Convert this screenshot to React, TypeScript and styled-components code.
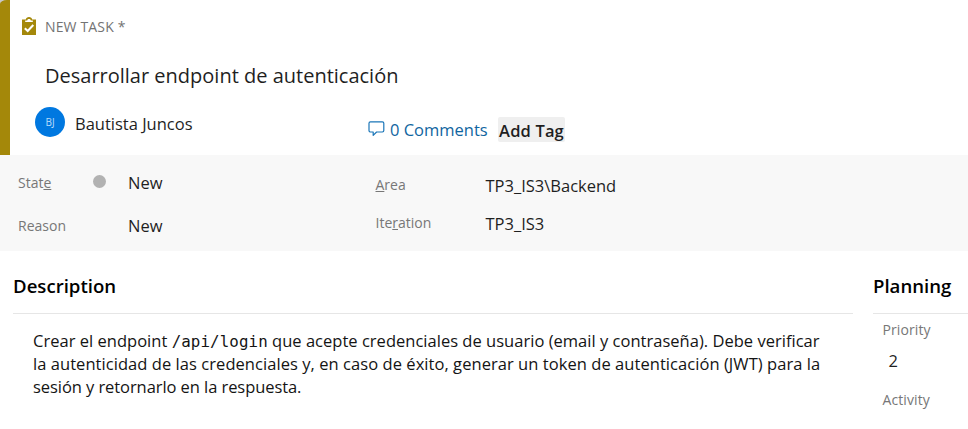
import React from "react";
import styled, { createGlobalStyle } from "styled-components";

const GlobalStyle = createGlobalStyle`
  * { box-sizing: border-box; }
  body {
    margin: 0;
    background: #fff;
    color: #1f1f1f;
    font-family: "Open Sans", "Noto Sans", sans-serif;
    font-size: 16.5px;
    line-height: 22px;
    overflow: hidden;
  }
`;

const Form = styled.main`
  display: flex;
  flex-direction: column;
  width: 968px;
  height: 429px;
  overflow: hidden;
`;

const HeaderFrame = styled.div`
  height: 155px;
  background: linear-gradient(#c8c8c8, #c8c8c8) 0 0 / 8px 8px no-repeat;
`;

const Header = styled.header`
  height: 155px;
  padding-top: 16px;
  border-left: 10px solid #a4880a;
  border-top-left-radius: 7px 4px;
  background: #fff;
  background-clip: padding-box;
`;

const TypeRow = styled.div`
  display: flex;
  align-items: center;
  height: 20px;
  padding-left: 12px;
  gap: 9px;
  color: #737373;
  font-size: 14px;
  line-height: 20px;
`;

const TypeName = styled.span`
  padding-top: 2px;
  letter-spacing: 0.15px;
`;

const Title = styled.h1`
  margin: 26px 0 0 35px;
  font-size: 20px;
  font-weight: 400;
  line-height: 28px;
`;

const PeopleRow = styled.div`
  display: flex;
  align-items: flex-start;
  margin-top: 16px;
  padding-left: 25px;
`;

const Avatar = styled.span`
  display: grid;
  place-items: center;
  width: 30px;
  height: 30px;
  margin: 1px 10px 0 0;
  border-radius: 50%;
  background: #0078e0;
  color: #b9dcfa;
  font-size: 10px;
  line-height: 14px;
`;

const Assignee = styled.span`
  width: 293px;
  padding-top: 7px;
`;

const Comments = styled.a`
  display: flex;
  gap: 5px;
  width: 130px;
  padding-top: 13px;
  color: #10659f;
  white-space: nowrap;

  svg { margin-top: 2px; flex: none; }
`;

const AddTag = styled.button`
  width: 67px;
  height: 25px;
  margin-top: 11px;
  padding: 2px 0 0;
  border: 0;
  border-radius: 2px;
  background: #efefef;
  color: #1f1f1f;
  font: 600 16.5px/22px "Open Sans", sans-serif;
  letter-spacing: 0.15px;
  white-space: nowrap;
`;

const Meta = styled.section`
  display: flex;
  height: 96px;
  background: #f8f8f8;
`;

const MetaColumn = styled.div<{ $width: number; $top: number; $gap: number }>`
  display: flex;
  flex-direction: column;
  width: ${(p) => p.$width}px;
  padding: ${(p) => p.$top}px 0 0 18px;
  gap: ${(p) => p.$gap}px;
`;

const Field = styled.div<{ $lift?: number }>`
  display: flex;
  align-items: flex-start;
  height: 22px;

  > label { padding-top: ${(p) => p.$lift ?? 0}px; }
`;

const Label = styled.label`
  width: 110px;
  color: #777;
  font-size: 14px;
  line-height: 20px;
`;

const StateLabel = styled(Label)`
  width: 75px;
`;

const Key = styled.span`
  text-decoration: underline;
  text-decoration-thickness: 1px;
  text-underline-offset: 1px;
  text-decoration-skip-ink: none;
`;

const StateDot = styled.span`
  width: 13px;
  height: 13px;
  margin: 3px 22px 0 0;
  border-radius: 50%;
  background: #b2b2b2;
`;

const Body = styled.div`
  display: grid;
  grid-template-columns: 840px 1fr;
  column-gap: 20px;
  padding: 22px 0 0 13px;
`;

const Heading = styled.h2`
  height: 41px;
  margin: 0;
  border-bottom: 1px solid #e6e6e6;
  color: #000;
  font-size: 18.6px;
  font-weight: 600;
  line-height: 26px;
`;

const Description = styled.p`
  margin: 0;
  padding: 15px 0 0 20px;
  color: #141414;
  line-height: 23px;
  white-space: nowrap;
`;

const Code = styled.code`
  font-family: "DejaVu Sans Mono", monospace;
  font-size: 15.8px;
  line-height: 1;
  letter-spacing: 0.1px;
`;

const Line = styled.span<{ $track?: number }>`
  display: block;
  letter-spacing: ${(p) => p.$track ?? 0}px;
`;

const Planning = styled.div`
  padding: 6px 0 0 9.5px;

  > label { display: block; letter-spacing: 0.1px; }
`;

const PriorityValue = styled.div`
  padding: 10px 0 18px 6px;
`;

export default function App() {
  return (
    <Form>
      <GlobalStyle />
      <HeaderFrame>
        <Header>
          <TypeRow>
            <svg width="14" height="18" viewBox="0 0 14 18" fill="none">
              <path d="M0 2.500H3.800C4 .9 5.300 0 7 0s3 .9 3.200 2.500H14V18H0Z" fill="#a4880a" />
              <path d="M3.200 3.600H5.200C5.500 2.500 6 2.100 7 2.100s1.500.4 1.800 1.500h2v1.500H3.200Z" fill="#fff" />
              <path d="m2.800 11.200 2.900 2.800 5.600-6" stroke="#fff" strokeWidth="2" />
            </svg>
            <TypeName>NEW TASK *</TypeName>
          </TypeRow>
          <Title>Desarrollar endpoint de autenticación</Title>
          <PeopleRow>
            <Avatar>BJ</Avatar>
            <Assignee>Bautista Juncos</Assignee>
            <Comments>
              <svg width="17" height="16" viewBox="0 0 17 16" fill="none" stroke="#1b76b8" strokeWidth="1.2">
                <path d="M2.400.8h12q1.400 0 1.400 1.400v7.400q0 1.400-1.400 1.400H8.600l-3.400 3.400V11H3.200Q1 11 1 9.600V2.200Q1 .8 2.400.8Z" strokeLinejoin="round" />
              </svg>
              <span>0 Comments</span>
            </Comments>
            <AddTag>Add Tag</AddTag>
          </PeopleRow>
        </Header>
      </HeaderFrame>

      <Meta>
        <MetaColumn $width={357.5} $top={17} $gap={21}>
          <Field $lift={1}>
            <StateLabel>Stat<Key>e</Key></StateLabel>
            <StateDot />
            <span>New</span>
          </Field>
          <Field $lift={1}>
            <Label>Reason</Label>
            <span>New</span>
          </Field>
        </MetaColumn>
        <MetaColumn $width={400} $top={20} $gap={16}>
          <Field>
            <Label><Key>A</Key>rea</Label>
            <span>TP3_IS3\Backend</span>
          </Field>
          <Field>
            <Label>Ite<Key>r</Key>ation</Label>
            <span>TP3_IS3</span>
          </Field>
        </MetaColumn>
      </Meta>

      <Body>
        <section>
          <Heading>Description</Heading>
          <Description>
            <Line $track={0.02}>
              Crear el endpoint <Code>/api/login</Code> que acepte credenciales de usuario (email y contraseña). Debe verificar
            </Line>
            <Line $track={0.055}>
              la autenticidad de las credenciales y, en caso de éxito, generar un token de autenticación (JWT) para la
            </Line>
            <Line $track={-0.07}>sesión y retornarlo en la respuesta.</Line>
          </Description>
        </section>
        <section>
          <Heading>Planning</Heading>
          <Planning>
            <Label>Priority</Label>
            <PriorityValue>2</PriorityValue>
            <Label>Activity</Label>
          </Planning>
        </section>
      </Body>
    </Form>
  );
}
